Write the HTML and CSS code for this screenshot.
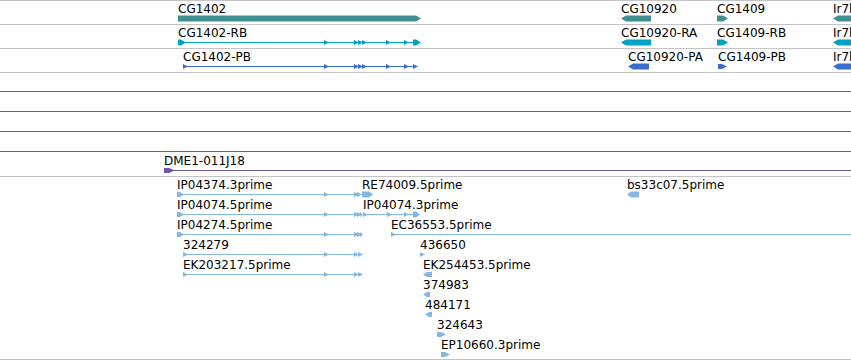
FILE: index.html
```html
<!DOCTYPE html>
<html lang="en">
<head>
<meta charset="utf-8">
<title>Genome browser tracks</title>
<link rel="stylesheet" href="styles.css">
</head>
<body>
<main class="view">
  <section class="track genes">
    <div class="row teal">
      <div class="f" style="left:178px"><span class="l">CG1402</span><svg width="243" height="7"><path d="M0 0.5H238L243 3.5L238 6.5H0Z"/></svg></div>
      <div class="f" style="left:621px"><span class="l">CG10920</span><svg width="30" height="7"><path d="M5 0.5H30V6.5H5L0 3.5Z"/></svg></div>
      <div class="f" style="left:717px"><span class="l">CG1409</span><svg width="11" height="7"><path d="M0 0.5H6L11 3.5L6 6.5H0Z"/></svg></div>
      <div class="f" style="left:833px"><span class="l">Ir7b</span><svg width="30" height="7"><path d="M5 0.5H30V6.5H5L0 3.5Z"/></svg></div>
    </div>
    <div class="row cyan">
      <div class="f" style="left:178px"><span class="l">CG1402-RB</span><svg width="244" height="7"><rect x="0" y="3" width="240" height="1"/><path d="M0 0.5H3L8 3.5L3 6.5H0Z"/><path d="M146 1L151 3.5L146 6Z"/><path d="M176 1L181 3.5L176 6Z"/><path d="M180 1L185 3.5L180 6Z"/><path d="M184 1L189 3.5L184 6Z"/><path d="M208 1L213 3.5L208 6Z"/><path d="M226 1L231 3.5L226 6Z"/><path d="M235 0.5H238L243 3.5L238 6.5H235Z"/></svg></div>
      <div class="f" style="left:621px"><span class="l">CG10920-RA</span><svg width="30" height="7"><path d="M5 0.5H30V6.5H5L0 3.5Z"/></svg></div>
      <div class="f" style="left:717px"><span class="l">CG1409-RB</span><svg width="11" height="7"><path d="M0 0.5H6L11 3.5L6 6.5H0Z"/></svg></div>
      <div class="f" style="left:833px"><span class="l">Ir7b-RA</span><svg width="30" height="7"><path d="M5 0.5H30V6.5H5L0 3.5Z"/></svg></div>
    </div>
    <div class="row blue">
      <div class="f" style="left:183px"><span class="l">CG1402-PB</span><svg width="236" height="7"><rect x="0" y="3" width="233" height="1"/><path d="M0 1L5 3.5L0 6Z"/><path d="M141 1L146 3.5L141 6Z"/><path d="M171 1L176 3.5L171 6Z"/><path d="M175 1L180 3.5L175 6Z"/><path d="M179 1L184 3.5L179 6Z"/><path d="M203 1L208 3.5L203 6Z"/><path d="M221 1L226 3.5L221 6Z"/><path d="M230 1L235 3.5L230 6Z"/></svg></div>
      <div class="f" style="left:628px"><span class="l">CG10920-PA</span><svg width="21" height="7"><path d="M5 0.5H21V6.5H5L0 3.5Z"/></svg></div>
      <div class="f" style="left:718px"><span class="l">CG1409-PB</span><svg width="9" height="7"><path d="M0 1H4L9 3.5L4 6H0Z"/></svg></div>
      <div class="f" style="left:833px"><span class="l">Ir7b-PA</span><svg width="30" height="7"><path d="M5 0.5H30V6.5H5L0 3.5Z"/></svg></div>
    </div>
  </section>

  <section class="track clones">
    <div class="row purple"><div class="f" style="left:0px"><span class="l"></span><svg width="851" height="7"><rect x="0" y="3" width="851" height="1"/></svg></div></div>
    <div class="row purple"><div class="f" style="left:0px"><span class="l"></span><svg width="851" height="7"><rect x="0" y="3" width="851" height="1"/></svg></div></div>
    <div class="row purple"><div class="f" style="left:0px"><span class="l"></span><svg width="851" height="7"><rect x="0" y="3" width="851" height="1"/></svg></div></div>
    <div class="row purple"><div class="f" style="left:0px"><span class="l"></span><svg width="851" height="7"><rect x="0" y="3" width="851" height="1"/></svg></div></div>
    <div class="row purple last"><div class="f" style="left:164px"><span class="l">DME1-011J18</span><svg width="687" height="7"><rect x="0" y="3" width="687" height="1"/><path d="M0 1H5L11 3.5L5 6H0Z"/></svg></div></div>
  </section>

  <section class="track ests">
    <div class="row est">
      <div class="f" style="left:177px"><span class="l">IP04374.3prime</span><svg width="186" height="7"><rect x="0" y="3" width="185" height="1"/><path d="M0 1H3L7 3.5L3 6H0Z"/><path d="M147 1L152 3.5L147 6Z"/><path d="M177 1L182 3.5L177 6Z"/><path d="M180 1L185 3.5L180 6Z"/></svg></div>
      <div class="f" style="left:362px"><span class="l">RE74009.5prime</span><svg width="11" height="7"><path d="M0 0.5H7L11 3.5L7 6.5H0Z"/></svg></div>
      <div class="f" style="left:627px"><span class="l">bs33c07.5prime</span><svg width="12" height="7"><path d="M4 0.5H12V6.5H4L0 3.5Z"/></svg></div>
    </div>
    <div class="row est">
      <div class="f" style="left:177px"><span class="l">IP04074.5prime</span><svg width="186" height="7"><rect x="0" y="3" width="185" height="1"/><path d="M0 1H3L7 3.5L3 6H0Z"/><path d="M147 1L152 3.5L147 6Z"/><path d="M177 1L182 3.5L177 6Z"/><path d="M180 1L185 3.5L180 6Z"/><path d="M183 1L186 3.5L183 6Z"/></svg></div>
      <div class="f" style="left:363px"><span class="l">IP04074.3prime</span><svg width="58" height="7"><rect x="0" y="3" width="55" height="1"/><path d="M0 1L5 3.5L0 6Z"/><path d="M24 1L29 3.5L24 6Z"/><path d="M41 1L46 3.5L41 6Z"/><path d="M50 0.5H53L57 3.5L53 6.5H50Z"/></svg></div>
    </div>
    <div class="row est">
      <div class="f" style="left:177px"><span class="l">IP04274.5prime</span><svg width="186" height="7"><rect x="0" y="3" width="185" height="1"/><path d="M0 1H3L7 3.5L3 6H0Z"/><path d="M147 1L152 3.5L147 6Z"/><path d="M177 1L182 3.5L177 6Z"/><path d="M180 1L185 3.5L180 6Z"/><path d="M183 1L186 3.5L183 6Z"/></svg></div>
      <div class="f" style="left:391px"><span class="l">EC36553.5prime</span><svg width="460" height="7"><rect x="0" y="3" width="460" height="1"/><path d="M0 1L5 3.5L0 6Z"/></svg></div>
    </div>
    <div class="row est">
      <div class="f" style="left:183px"><span class="l">324279</span><svg width="180" height="7"><rect x="0" y="3" width="178" height="1"/><path d="M0 1L5 3.5L0 6Z"/><path d="M141 1L146 3.5L141 6Z"/><path d="M171 1L176 3.5L171 6Z"/><path d="M175 1L180 3.5L175 6Z"/></svg></div>
      <div class="f" style="left:420px"><span class="l">436650</span><svg width="6" height="7"><path d="M0 1L5 3.5L0 6Z"/></svg></div>
    </div>
    <div class="row est">
      <div class="f" style="left:183px"><span class="l">EK203217.5prime</span><svg width="180" height="7"><rect x="0" y="3" width="178" height="1"/><path d="M0 1L5 3.5L0 6Z"/><path d="M141 1L146 3.5L141 6Z"/><path d="M171 1L176 3.5L171 6Z"/><path d="M175 1L180 3.5L175 6Z"/></svg></div>
      <div class="f" style="left:423px"><span class="l">EK254453.5prime</span><svg width="9" height="7"><path d="M4 1H9V6H4L0 3.5Z"/></svg></div>
    </div>
    <div class="row est">
      <div class="f" style="left:423px"><span class="l">374983</span><svg width="7" height="7"><path d="M4 1H7V6H4L0 3.5Z"/></svg></div>
    </div>
    <div class="row est">
      <div class="f" style="left:425px"><span class="l">484171</span><svg width="7" height="7"><path d="M4 1H7V6H4L0 3.5Z"/></svg></div>
    </div>
    <div class="row est">
      <div class="f" style="left:437px"><span class="l">324643</span><svg width="9" height="7"><path d="M0 1H4L9 3.5L4 6H0Z"/></svg></div>
    </div>
    <div class="row est">
      <div class="f" style="left:441px"><span class="l">EP10660.3prime</span><svg width="9" height="7"><path d="M0 1H4L9 3.5L4 6H0Z"/></svg></div>
    </div>
  </section>
</main>
</body>
</html>
```

FILE: styles.css
```css
* {
  box-sizing: border-box;
}

html,
body {
  margin: 0;
  padding: 0;
  background: #ffffff;
  overflow: hidden;
}

body {
  width: 851px;
  height: 360px;
  font-family: "DejaVu Sans", "Liberation Sans", sans-serif;
  font-size: 12px;
  color: #000000;
}

.view {
  width: 851px;
  overflow: hidden;
}

.track {
  position: relative;
}

.row {
  position: relative;
  height: 20px;
}

.genes {
  border-bottom: 1px solid #c4c4c4;
}

.genes .row {
  height: 24px;
  border-top: 1px solid #c4c4c4;
}

.clones {
  padding: 1px 0 2px;
}

.clones .last .f {
  top: 0;
}

.ests {
  border-top: 1px solid #c4c4c4;
  border-bottom: 1px solid #c4c4c4;
  padding-bottom: 2px;
}

.f {
  position: absolute;
  top: 1px;
  white-space: nowrap;
}

.l {
  display: block;
  height: 13px;
  line-height: 15px;
}

.f svg {
  display: block;
  overflow: visible;
}

.teal svg {
  fill: #3f8f92;
}

.cyan svg {
  fill: #00a2c4;
}

.blue svg {
  fill: #3a6dd0;
}

.purple svg {
  fill: #6f56ad;
}

.est svg {
  fill: #86b7e0;
}
```
